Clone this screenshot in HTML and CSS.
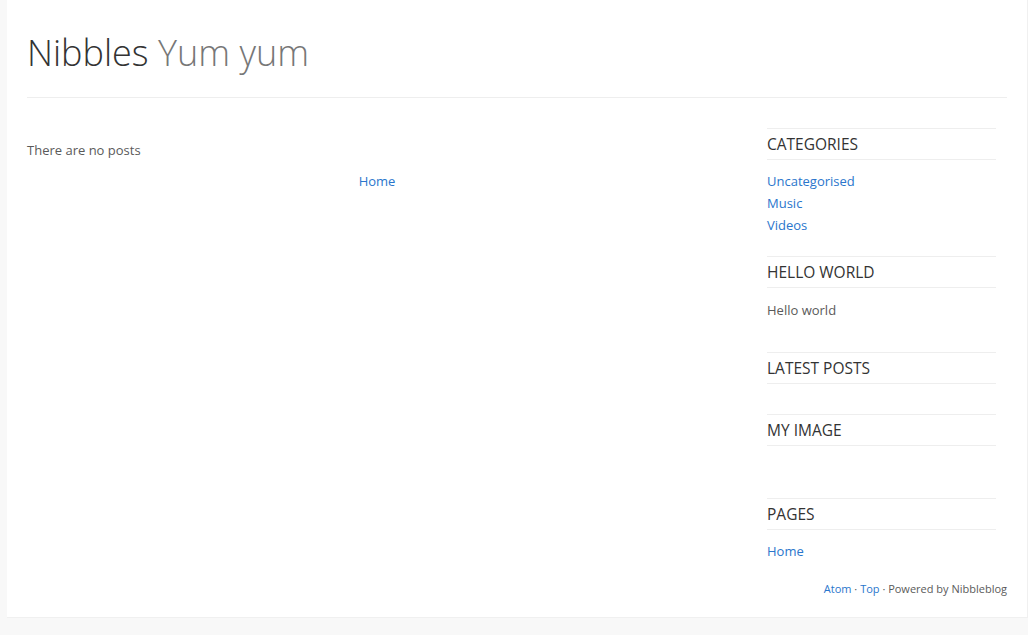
FILE: index.html
```html
<!DOCTYPE html>
<html lang="en">

<head>
  <meta charset="UTF-8">
  <meta name="viewport" content="width=device-width, initial-scale=1.0">
  <title>Nibbles - Yum yum</title>
  <link rel="stylesheet" href="styles.css">
</head>

<body>
  <div class="page">
    <header class="header">
      <h1 class="site-title">Nibbles <span class="slogan">Yum yum</span></h1>
    </header>

    <div class="content">
      <main class="main">
        <p class="no-posts">There are no posts</p>
        <div class="pager"><a href="#">Home</a></div>
      </main>

      <aside class="sidebar">
        <div class="widget">
          <h3 class="widget-title">Categories</h3>
          <ul class="widget-list">
            <li><a href="#">Uncategorised</a></li>
            <li><a href="#">Music</a></li>
            <li><a href="#">Videos</a></li>
          </ul>
        </div>

        <div class="widget">
          <h3 class="widget-title">Hello world</h3>
          <div class="widget-body">
            <p>Hello world</p>
          </div>
        </div>

        <div class="widget">
          <h3 class="widget-title">Latest posts</h3>
          <ul class="widget-list"></ul>
        </div>

        <div class="widget">
          <h3 class="widget-title">My image</h3>
          <div class="widget-body image-box"></div>
        </div>

        <div class="widget">
          <h3 class="widget-title">Pages</h3>
          <ul class="widget-list">
            <li><a href="#">Home</a></li>
          </ul>
        </div>
      </aside>
    </div>

    <footer class="footer">
      <a href="#">Atom</a> · <a href="#">Top</a> · Powered by Nibbleblog
    </footer>
  </div>
</body>

</html>
```

FILE: styles.css
```css
body {
  margin: 0;
  background: #f8f8f8;
  font-family: "Open Sans", "Noto Sans", sans-serif;
  font-size: 13px;
  color: #5a5a5a;
}

a {
  color: #2a76cc;
  text-decoration: none;
}

.page {
  width: 1021px;
  margin-left: 7px;
  box-sizing: border-box;
  padding: 0 20px;
  background: #fff;
  border-right: 1px solid #f0f0f0;
  border-bottom: 1px solid #f0f0f0;
}

/* cabecera */
.header {
  padding-top: 30px;
  border-bottom: 1px solid #eee;
  height: 67px;
}

.site-title {
  margin: 0;
  font-size: 36px;
  font-weight: 300;
  line-height: 46px;
  color: #333;
}

.slogan {
  color: #777;
}

/* contenido */
.content {
  display: flex;
  gap: 40px;
  margin-top: 30px;
}

.main {
  width: 700px;
  padding-top: 11px;
}

.no-posts {
  margin: 0;
  line-height: 22px;
}

.pager {
  margin-top: 9px;
  text-align: center;
  line-height: 22px;
}

.sidebar {
  width: 229px;
}

.widget {
  padding-bottom: 20px;
}

.widget:last-child {
  padding-bottom: 0;
}

.widget-title {
  margin: 0;
  border-top: 1px solid #eee;
  border-bottom: 1px solid #eee;
  font-size: 15.5px;
  font-weight: 400;
  line-height: 30px;
  text-transform: uppercase;
  color: #333;
}

.widget-list {
  list-style: none;
  margin: 0;
  padding: 10px 0 0;
}

.widget-list li {
  line-height: 22px;
}

.widget-body {
  padding-top: 11px;
}

.widget-body p {
  margin: 0 0 11px;
  line-height: 22px;
}

.image-box {
  height: 21px;
}

.footer {
  text-align: right;
  font-size: 11px;
  line-height: 22px;
  padding: 16px 0 17px;
}
```
